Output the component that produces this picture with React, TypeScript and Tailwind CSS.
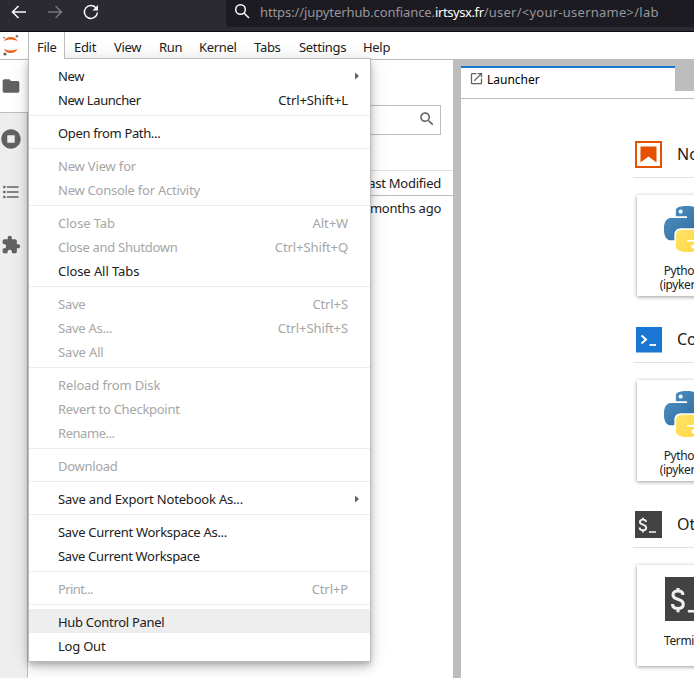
import type { ReactNode } from 'react';

type Entry = {
  label: string;
  keys?: string;
  disabled?: boolean;
  submenu?: boolean;
  active?: boolean;
  spacing?: string;
};

const groups: Entry[][] = [
  [
    { label: 'New', submenu: true, spacing: 'tracking-[-0.3px]' },
    { label: 'New Launcher', keys: 'Ctrl+Shift+L', spacing: 'tracking-[-0.42px]' },
  ],
  [{ label: 'Open from Path...', spacing: 'tracking-[-0.35px]' }],
  [
    { label: 'New View for', disabled: true, spacing: 'tracking-[-0.17px]' },
    { label: 'New Console for Activity', disabled: true, spacing: 'tracking-[-0.25px]' },
  ],
  [
    { label: 'Close Tab', keys: 'Alt+W', disabled: true, spacing: 'tracking-[-0.1px]' },
    { label: 'Close and Shutdown', keys: 'Ctrl+Shift+Q', disabled: true, spacing: 'tracking-[-0.3px]' },
    { label: 'Close All Tabs', spacing: 'tracking-[-0.08px]' },
  ],
  [
    { label: 'Save', keys: 'Ctrl+S', disabled: true, spacing: 'tracking-[-0.25px]' },
    { label: 'Save As...', keys: 'Ctrl+Shift+S', disabled: true, spacing: 'tracking-[-0.25px]' },
    { label: 'Save All', disabled: true, spacing: 'tracking-[-0.15px]' },
  ],
  [
    { label: 'Reload from Disk', disabled: true, spacing: 'tracking-[-0.13px]' },
    { label: 'Revert to Checkpoint', disabled: true, spacing: 'tracking-[-0.28px]' },
    { label: 'Rename...', disabled: true, spacing: 'tracking-[-0.45px]' },
  ],
  [{ label: 'Download', disabled: true, spacing: 'tracking-[-0.3px]' }],
  [{ label: 'Save and Export Notebook As...', submenu: true, spacing: 'tracking-[-0.19px]' }],
  [
    { label: 'Save Current Workspace As...', spacing: 'tracking-[-0.3px]' },
    { label: 'Save Current Workspace', spacing: 'tracking-[-0.33px]' },
  ],
  [{ label: 'Print...', keys: 'Ctrl+P', disabled: true, spacing: 'tracking-[-0.6px]' }],
  [
    { label: 'Hub Control Panel', active: true, spacing: 'tracking-[-0.3px]' },
    { label: 'Log Out', spacing: 'tracking-[-0.22px]' },
  ],
];

function Icon({ d, className }: { d: string; className: string }) {
  return (
    <svg viewBox="0 0 24 24" className={className} fill="#616161">
      <path d={d} />
    </svg>
  );
}

const FOLDER =
  'M10 4H4c-1.1 0-1.99.9-1.99 2L2 18c0 1.1.9 2 2 2h16c1.1 0 2-.9 2-2V8c0-1.1-.9-2-2-2h-8l-2-2z';
const TOC =
  'M7 5H21V7H7V5M7 13V11H21V13H7M4 4.5A1.5 1.5 0 0 1 5.5 6A1.5 1.5 0 0 1 4 7.5A1.5 1.5 0 0 1 2.5 6A1.5 1.5 0 0 1 4 4.5M4 10.5A1.5 1.5 0 0 1 5.5 12A1.5 1.5 0 0 1 4 13.5A1.5 1.5 0 0 1 2.5 12A1.5 1.5 0 0 1 4 10.5M7 19V17H21V19H7M4 16.5A1.5 1.5 0 0 1 5.5 18A1.5 1.5 0 0 1 4 19.5A1.5 1.5 0 0 1 2.5 18A1.5 1.5 0 0 1 4 16.5Z';
const PUZZLE =
  'M20.5 11H19V7c0-1.1-.9-2-2-2h-4V3.5C13 2.12 11.88 1 10.5 1S8 2.12 8 3.5V5H4c-1.1 0-1.99.9-1.99 2v3.8H3.5c1.49 0 2.7 1.21 2.7 2.7s-1.21 2.7-2.7 2.7H2V20c0 1.1.9 2 2 2h3.8v-1.5c0-1.49 1.21-2.7 2.7-2.7 1.49 0 2.7 1.21 2.7 2.7V22H17c1.1 0 2-.9 2-2v-4h1.5c1.38 0 2.5-1.12 2.5-2.5S21.88 11 20.5 11z';
const SEARCH =
  'M15.5 14h-.79l-.28-.27C15.41 12.59 16 11.11 16 9.5 16 5.91 13.09 3 9.5 3S3 5.91 3 9.5 5.91 16 9.5 16c1.61 0 3.09-.59 4.23-1.57l.27.28v.79l5 4.99L20.49 19l-4.99-5zm-6 0C7.01 14 5 11.99 5 9.5S7.01 5 9.5 5 14 7.01 14 9.5 11.99 14 9.5 14z';
const LAUNCH =
  'M19 19H5V5h7V3H5a2 2 0 0 0-2 2v14a2 2 0 0 0 2 2h14c1.1 0 2-.9 2-2v-7h-2v7zM14 3v2h3.59l-9.83 9.83 1.41 1.41L19 6.41V10h2V3h-7z';

function BrowserBar() {
  return (
    <header className="flex h-8 shrink-0 border-b border-[#0c0c0d] bg-[#2b2a33]">
      <svg viewBox="0 0 226 31" className="h-[31px] w-[226px] shrink-0" fill="none" strokeWidth="1.5">
        <path d="M26 12H12.5M18.5 6l-6 6 6 6" stroke="#fbfbfe" />
        <path d="M48 12h13.5M55.500 6l6 6-6 6" stroke="#77767d" />
        <path d="M96.300 8.300A6.500 6.500 0 1 0 97.400 12.500" stroke="#fbfbfe" />
        <path d="M98 5v5.500h-5.500z" fill="#fbfbfe" />
      </svg>
      <div className="flex h-[27px] flex-1 items-start rounded-bl bg-[#1c1b22]">
        <svg viewBox="0 0 34 27" className="h-[27px] w-[34px] shrink-0" fill="none" stroke="#fbfbfe" strokeWidth="1.500">
          <circle cx="14.500" cy="9.500" r="4.800" />
          <path d="M18 13l5 5" />
        </svg>
        <div className="whitespace-pre text-[13px] leading-[25px] text-[#97969c]">
          <span className="tracking-[-0.1px]">https://jupyterhub.confiance.</span>
          <span className="tracking-[-0.4px] text-[#fbfbfe]">irtsysx.fr</span>
          <span className="tracking-[0.25px]">/user/&lt;your-username&gt;/lab</span>
        </div>
      </div>
    </header>
  );
}

function JupyterLogo() {
  return (
    <svg viewBox="0 0 28 27" className="h-[27px] w-7 shrink-0">
      <path d="M3.800 9.300C6 3.600 15.400 3.600 17.600 9.300C14 6.900 7.400 6.900 3.800 9.300z" fill="#ee5f12" />
      <path d="M3.800 16.700C6 22.400 15.400 22.400 17.600 16.700C14 19.100 7.400 19.100 3.800 16.700z" fill="#ee5f12" />
      <circle cx="4.200" cy="5.600" r="0.900" fill="#767677" />
      <circle cx="16.900" cy="4.300" r="1.300" fill="#767677" />
      <circle cx="5" cy="22" r="1.600" fill="#616262" />
    </svg>
  );
}

const tabClass = 'leading-[31px]';

function MenuBar() {
  return (
    <nav className="flex h-7 shrink-0 border-b border-[#bdbdbd] bg-white tracking-[-0.3px]">
      <JupyterLogo />
      <div className="relative z-20 h-[27px] w-[37px] border-x border-[#bdbdbd] bg-white pl-2 leading-[31px]">File</div>
      <div className="flex h-[27px] pl-[9px]">
        <span className={tabClass + ' w-10'}>Edit</span>
        <span className={tabClass + ' w-[45px]'}>View</span>
        <span className={tabClass + ' w-10'}>Run</span>
        <span className={tabClass + ' w-[55px]'}>Kernel</span>
        <span className={tabClass + ' w-[45px]'}>Tabs</span>
        <span className={tabClass + ' w-16'}>Settings</span>
        <span className={tabClass}>Help</span>
      </div>
    </nav>
  );
}

function FileMenu() {
  return (
    <div className="absolute left-7 top-[58px] z-10 w-[343px] border border-[#bdbdbd] bg-white py-1 shadow-[0_3px_5px_-1px_rgba(0,0,0,0.2),0_6px_10px_0_rgba(0,0,0,0.14),0_1px_18px_0_rgba(0,0,0,0.12)]">
      {groups.map((group, i) => (
        <div key={i}>
          {i > 0 && <div className="my-1 h-px bg-[#eeeeee]" />}
          {group.map((e) => (
            <div
              key={e.label}
              className={
                'flex h-6 items-center justify-between pl-[29px] pt-[2px] leading-[22px] ' +
                (e.disabled ? 'text-[#a6a6a6] ' : 'text-[#212121] ') +
                (e.active ? 'bg-[#eeeeee]' : '')
              }
            >
              <span className={e.spacing}>{e.label}</span>
              {e.keys && <span className="pr-[22px] tracking-[-0.1px]">{e.keys}</span>}
              {e.submenu && (
                <svg viewBox="0 0 4 8" className="mr-[11px] h-2 w-1" fill="#616161">
                  <path d="M0 0.500L4 4 0 7.500z" />
                </svg>
              )}
            </div>
          ))}
        </div>
      ))}
    </div>
  );
}

function SideBar() {
  const cell = 'flex h-[53px] items-center pl-px';
  return (
    <aside className="flex w-7 shrink-0 flex-col bg-[#eeeeee]">
      <div className={cell + ' border-b border-[#bdbdbd] bg-white'}>
        <Icon d={FOLDER} className="size-5" />
      </div>
      <div className="flex-1 border-r border-[#bdbdbd]">
        <div className="flex h-[52px] items-center pl-px">
          <svg viewBox="0 0 512 512" className="size-5" fill="#616161">
            <path d="M256 8C119 8 8 119 8 256s111 248 248 248 248-111 248-248S393 8 256 8zm96 328c0 8.800-7.200 16-16 16H176c-8.800 0-16-7.200-16-16V176c0-8.800 7.200-16 16-16h160c8.800 0 16 7.200 16 16v160z" />
          </svg>
        </div>
        <div className={cell}>
          <Icon d={TOC} className="size-5" />
        </div>
        <div className={cell}>
          <Icon d={PUZZLE} className="size-5" />
        </div>
      </div>
    </aside>
  );
}

function FilePanel() {
  return (
    <section className="w-[425px] shrink-0 bg-white text-right tracking-[-0.25px] text-[#212121]">
      <div className="ml-3 mr-3 mt-[45px] flex h-[30px] items-center justify-end border border-[#bdbdbd] pb-[2px] pr-1">
        <Icon d={SEARCH} className="size-[18px]" />
      </div>
      <div className="mt-[35px] h-[26px] border-b border-t border-b-[#bdbdbd] border-t-[#e0e0e0] pr-3 leading-[25px]">Last Modified</div>
      <div className="h-6 pr-3 leading-[25px]">4 months ago</div>
    </section>
  );
}

function PythonLogo() {
  return (
    <svg viewBox="0 0 24 24" className="size-[46px]">
      <defs>
        <linearGradient id="pyBlue" x1="0" y1="0" x2="1" y2="1">
          <stop offset="0" stopColor="#4f93c8" />
          <stop offset="1" stopColor="#306998" />
        </linearGradient>
        <linearGradient id="pyYellow" x1="0" y1="0" x2="1" y2="1">
          <stop offset="0" stopColor="#ffe873" />
          <stop offset="1" stopColor="#ffd43b" />
        </linearGradient>
      </defs>
      <path
        fill="url(#pyBlue)"
        d="M14.25.18l.9.2.73.26.59.3.45.32.34.34.25.34.16.33.1.3.04.26.02.2-.01.13V8.5l-.05.63-.13.55-.21.46-.26.38-.3.31-.33.25-.35.19-.35.14-.33.1-.3.07-.26.04-.21.02H8.77l-.69.05-.59.14-.5.22-.41.27-.33.32-.27.35-.2.36-.15.37-.1.35-.07.32-.04.27-.02.21v3.06H3.17l-.21-.03-.28-.07-.32-.12-.35-.18-.36-.26-.36-.36-.35-.46-.32-.59-.28-.73-.21-.88-.14-1.05-.05-1.23.06-1.22.16-1.04.24-.87.32-.71.36-.57.4-.44.42-.33.42-.24.4-.16.36-.1.32-.05.24-.01h.16l.06.01h8.16v-.83H6.18l-.01-2.75-.02-.37.05-.34.11-.31.17-.28.25-.26.31-.23.38-.2.44-.18.51-.15.58-.12.64-.1.71-.06.77-.04.84-.02 1.27.05zm-6.3 1.98l-.23.33-.08.41.08.41.23.34.33.22.41.09.41-.09.33-.22.23-.34.08-.41-.08-.41-.23-.33-.33-.22-.41-.09-.41.09z"
      />
      <path
        fill="url(#pyYellow)"
        d="M21.04 6.11l.28.06.32.12.35.18.36.27.36.35.35.47.32.59.28.73.21.88.14 1.04.05 1.23-.06 1.23-.16 1.04-.24.86-.32.71-.36.57-.4.45-.42.33-.42.24-.4.16-.36.09-.32.05-.24.02-.16-.01h-8.22v.82h5.84l.01 2.76.02.36-.05.34-.11.31-.17.29-.25.25-.31.24-.38.2-.44.17-.51.15-.58.13-.64.09-.71.07-.77.04-.84.01-1.27-.04-1.07-.14-.9-.2-.73-.25-.59-.3-.45-.33-.34-.34-.25-.34-.16-.33-.1-.3-.04-.25-.02-.2.01-.13v-5.34l.05-.64.13-.54.21-.46.26-.38.3-.32.33-.24.35-.2.35-.14.33-.1.3-.06.26-.04.21-.02.13-.01h5.84l.69-.05.59-.14.5-.21.41-.28.33-.32.27-.35.2-.36.15-.36.1-.35.07-.32.04-.28.02-.21V6.07h2.09l.14.01zm-6.47 14.25l-.23.33-.08.41.08.41.23.33.33.23.41.08.41-.08.33-.23.23-.33.08-.41-.08-.41-.23-.33-.33-.23-.41-.08-.41.08z"
      />
    </svg>
  );
}

function Terminal({ className }: { className: string }) {
  return (
    <svg viewBox="0 0 27 27" className={className} fill="none" stroke="#f0f0f0">
      <path d="M0 0h27v27H0z" fill="#424242" stroke="none" />
      <path
        d="M11 11C11 9.200 9.700 8.600 7.900 8.600S4.900 9.400 4.900 11C4.900 14.500 11.200 12.900 11.200 16.700C11.200 18.500 9.800 19.300 8 19.300S4.600 18.500 4.600 16.500M8 6.800v2M8 19v2.600"
        strokeWidth="1.900"
      />
      <path d="M14 21h7" strokeWidth="1.600" />
    </svg>
  );
}

function Section({ icon, title, children }: { icon: ReactNode; title: string; children: ReactNode }) {
  return (
    <div className="h-[185px] w-[300px] shrink-0">
      <div className="flex h-[47px] items-center border-b border-[#e0e0e0] pl-[2px]">
        {icon}
        <span className="ml-[15px] whitespace-nowrap text-[16px] leading-6 text-[#212121]">{title}</span>
      </div>
      <div className="ml-1 mt-[17px] flex h-[101px] w-[100px] flex-col items-center bg-white text-[12px] leading-[14px] tracking-[-0.4px] text-[#212121] shadow-[0_1px_4px_rgba(0,0,0,0.4)]">
        {children}
      </div>
    </div>
  );
}

function Kernel() {
  return (
    <>
      <div className="mt-[11px] h-[58px]">
        <PythonLogo />
      </div>
      <div>Python 3</div>
      <div>(ipykernel)</div>
    </>
  );
}

function MainArea() {
  return (
    <main className="flex min-w-0 flex-1 flex-col overflow-hidden bg-white">
      <div className="flex h-[31px] bg-[#bdbdbd] pl-2">
        <div className="mt-[6px] flex h-[25px] w-[214px] items-start border-t-2 border-[#1976d2] bg-white pl-2 text-[12px] text-black">
          <Icon d={LAUNCH} className="mt-[3px] size-[15px]" />
          <span className="ml-[3px] mt-[2px] leading-[19px]">Launcher</span>
        </div>
      </div>
      <div className="flex min-h-0 flex-1">
        <div className="w-2 shrink-0 bg-[#bdbdbd]" />
        <div className="min-w-0 flex-1">
          <div className="h-2 border-b border-[#bdbdbd]" />
          <div className="h-[579px] overflow-hidden pl-[172px] pt-8">
            <Section
              title="Notebook"
              icon={
                <svg viewBox="0 0 27 27" className="size-[27px]" fill="#e65100">
                  <path d="M0 0h27v27H0zM2 2v23h23V2z" fillRule="evenodd" />
                  <path d="M5.500 5.500h16V21.500L13.500 15.500 5.500 21.500z" />
                </svg>
              }
            >
              <Kernel />
            </Section>
            <Section
              title="Console"
              icon={
                <svg viewBox="0 0 27 27" className="size-[27px]" fill="none" stroke="#fff">
                  <path d="M1 1h26v25.500H1z" fill="#1976d2" stroke="none" />
                  <path d="M6.500 9.500l4.500 4-4.500 4" strokeWidth="2" />
                  <path d="M14.500 19h6.500" strokeWidth="1.800" />
                </svg>
              }
            >
              <Kernel />
            </Section>
            <Section title="Other" icon={<Terminal className="size-[27px]" />}>
              <div className="mt-3 h-[57px]">
                <Terminal className="size-11" />
              </div>
              Terminal
            </Section>
          </div>
        </div>
      </div>
    </main>
  );
}

export default function App() {
  return (
    <div className="relative flex h-[678px] w-[694px] flex-col overflow-hidden bg-white font-['Noto_Sans','Liberation_Sans',sans-serif] text-[13px] text-[#212121]">
      <BrowserBar />
      <MenuBar />
      <div className="flex min-h-0 flex-1">
        <SideBar />
        <FilePanel />
        <MainArea />
      </div>
      <FileMenu />
    </div>
  );
}
